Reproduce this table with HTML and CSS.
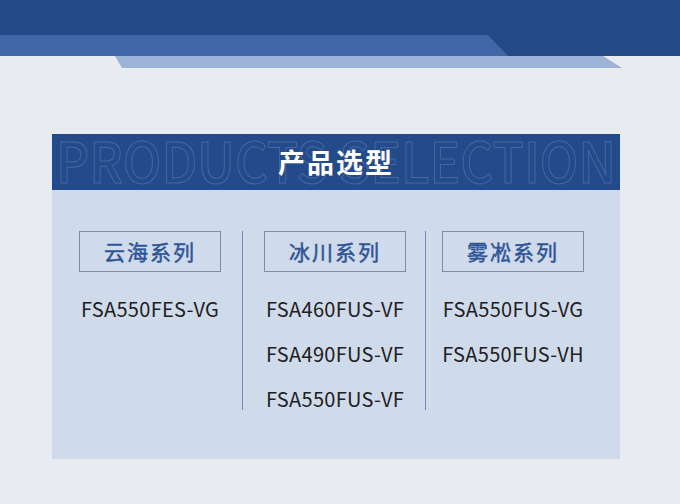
FILE: index.html
```html
<!DOCTYPE html>
<html lang="zh">
<head>
<meta charset="utf-8">
<title>产品选型</title>
<link rel="stylesheet" href="styles.css">
</head>
<body>
<div class="page">
  <div class="top">
    <div class="ribbon"></div>
  </div>
  <div class="ribbon-light"></div>

  <section class="panel">
    <header class="panel-head">
      <svg class="bg-word" viewBox="0 0 568 56" width="568" height="56" aria-hidden="true">
        <text x="4" y="49" textLength="560" lengthAdjust="spacingAndGlyphs">PRODUCTS SELECTION</text>
      </svg>
      <h1 class="title">产品选型</h1>
    </header>
    <div class="panel-body">
      <div class="col">
        <div class="series">云海系列</div>
        <ul class="models">
          <li>FSA550FES-VG</li>
        </ul>
      </div>
      <div class="divider"></div>
      <div class="col">
        <div class="series">冰川系列</div>
        <ul class="models">
          <li>FSA460FUS-VF</li>
          <li>FSA490FUS-VF</li>
          <li>FSA550FUS-VF</li>
        </ul>
      </div>
      <div class="divider divider--tight"></div>
      <div class="col">
        <div class="series">雾凇系列</div>
        <ul class="models">
          <li>FSA550FUS-VG</li>
          <li>FSA550FUS-VH</li>
        </ul>
      </div>
    </div>
  </section>
</div>
</body>
</html>
```

FILE: styles.css
```css
* { box-sizing: border-box; }

html, body {
  margin: 0;
  padding: 0;
  background: #e8ebf0;
}

body {
  font-family: "Noto Sans CJK SC", "Noto Sans", sans-serif;
}

.page {
  width: 680px;
  height: 504px;
  overflow: hidden;
  background: #e8ebf0;
}

.top {
  height: 56px;
  padding-top: 35px;
  background: #234a87;
}

.ribbon {
  width: 508px;
  height: 21px;
  background: #3f66a5;
  clip-path: polygon(0 0, 488px 0, 100% 100%, 0 100%);
}

.ribbon-light {
  width: 507px;
  height: 12px;
  margin-left: 115px;
  background: #9cb3d7;
  clip-path: polygon(0 0, 488px 0, 100% 100%, 7px 100%);
}

.panel {
  width: 568px;
  height: 325px;
  margin: 66px 0 0 52px;
  background: #cfdbea;
}

.panel-head {
  height: 56px;
  background: #244b89;
  display: grid;
  place-items: center;
}

.bg-word,
.title {
  grid-area: 1 / 1;
}

.bg-word {
  display: block;
}

.bg-word text {
  font-family: "Noto Sans CJK SC", "Noto Sans", sans-serif;
  font-size: 56px;
  font-weight: 500;
  fill: none;
  stroke: #4468a3;
  stroke-width: 1;
}

.title {
  position: relative;
  margin: 0;
  color: #ffffff;
  font-size: 27px;
  font-weight: 700;
  letter-spacing: 2px;
  line-height: 56px;
}

.panel-body {
  display: flex;
  align-items: flex-start;
  padding: 41px 0 0 27px;
}

.col {
  width: 142px;
}

.divider {
  width: 1px;
  height: 179px;
  margin: 0 21px;
  background: #6f8bb8;
}

.divider--tight {
  margin: 0 16px 0 19px;
}

.series {
  height: 41px;
  border: 1px solid #7f8ea5;
  color: #2f5597;
  font-size: 21px;
  font-weight: 400;
  -webkit-text-stroke: 0.5px #2f5597;
  letter-spacing: 2px;
  line-height: 39px;
  text-align: center;
}

.models {
  list-style: none;
  margin: 14px 0 0;
  padding: 0;
  color: #1f2022;
  font-size: 20px;
  letter-spacing: 0.3px;
  line-height: 45px;
  text-align: center;
  white-space: nowrap;
}
```
